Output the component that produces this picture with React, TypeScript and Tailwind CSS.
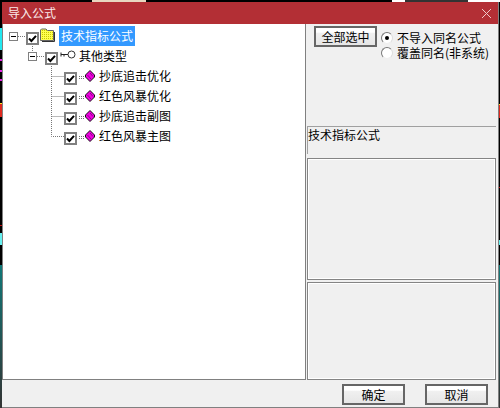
const cjk = "font-['Noto_Sans_CJK_SC','Noto_Sans_CJK_JP',sans-serif]";

const items = ["抄底追击优化", "红色风暴优化", "抄底追击副图", "红色风暴主图"];

const Check = () => (
  <div className="mt-[6px] flex h-[13px] w-[13px] shrink-0 items-center justify-center border-2 border-[#808080] bg-white">
    <svg width="9" height="9" viewBox="0 0 9 9">
      <path d="M1 4.5 L3.4 7 L8 1.8" fill="none" stroke="#000" strokeWidth="2" />
    </svg>
  </div>
);

const Expander = ({ x }: { x: number }) => (
  <>
    <rect x={x + 0.5} y="6.5" width="8" height="8" fill="#fff" stroke="#808080" />
    <path d={`M${x + 2} 10.5H${x + 7}`} stroke="#000" />
  </>
);

const Folder = () => (
  <svg width="15" height="14" viewBox="0 0 15 14" className="mt-[2px] ml-px mr-px shrink-0">
    <defs>
      <pattern id="hatch" width="2" height="2" patternUnits="userSpaceOnUse">
        <rect width="2" height="2" fill="#ffff50" />
        <rect width="1" height="1" fill="#c8c800" />
      </pattern>
    </defs>
    <path d="M0.5 12.5V2L1.5 1H6L7.5 2.5H13.5V12.5Z" fill="url(#hatch)" stroke="#666" />
    <path d="M14.5 4V13.5H2" fill="none" stroke="#333" />
  </svg>
);

const KeyIcon = () => (
  <svg width="16" height="12" viewBox="0 0 16 12" className="mt-[3px] ml-[2px] shrink-0">
    <circle cx="11.5" cy="5.5" r="3.5" fill="#fff" stroke="#333" />
    <path d="M1 5.5H8M1 3.5V7.5M4 5.5V7.5" fill="none" stroke="#222" />
  </svg>
);

const Gem = () => (
  <svg width="16" height="14" viewBox="0 0 16 14" className="mt-[4px] ml-[2px] shrink-0">
    <path d="M0 6.5H6M0 8.5H6" stroke="#707070" strokeDasharray="1 1" />
    <path d="M11 0.5L15.5 5V7L11 11.5L6.5 7V5Z" fill="#f000e0" stroke="#111" />
    <path d="M8.5 5L12 9M11 3L14 6.5" stroke="#900090" />
  </svg>
);

const Panel = ({ className }: { className: string }) => (
  <div className={`mr-[2px] border border-[#848484] bg-[#f0f0f0] shadow-[inset_0_0_0_1px_#fff] ${className}`} />
);

const DlgButton = ({ label, className }: { label: string; className: string }) => (
  <button
    className={`flex items-center justify-center border-2 border-[#666] bg-[linear-gradient(#fff_0,#fff_25%,#f0f0f0_30%,#e6e6e6_100%)] text-[12px] leading-none text-black ${className}`}
  >
    {label}
  </button>
);

const Radio = ({ checked, label }: { checked?: boolean; label: string }) => (
  <div className="flex h-[15px] items-center">
    <div className="flex h-[12px] w-[12px] shrink-0 items-center justify-center rounded-full border border-t-[#777] border-r-[#ddd] border-b-[#eee] border-l-[#777] bg-white">
      {checked && <div className="h-[4px] w-[4px] rounded-full bg-black" />}
    </div>
    <span className="ml-[4px] text-[12px] leading-[15px] whitespace-nowrap text-black">{label}</span>
  </div>
);

export default function App() {
  return (
    <div className={`flex h-[408px] w-[500px] flex-col overflow-hidden bg-black ${cjk}`}>
      {/* bits of the desktop behind the dialog */}
      <div className="flex h-[2px] shrink-0">
        <div className="w-[92px]" />
        <div className="w-[54px] bg-[#e8d8c0]" />
        <div className="w-[246px]" />
        <div className="w-[13px] bg-white" />
        <div className="w-[63px] bg-[#333]" />
        <div className="w-[32px] bg-white" />
      </div>
      <div className="flex min-h-0 flex-1">
        <div className="flex w-[2px] shrink-0 flex-col">
          <div className="h-[26px]" />
          <div className="h-[22px] bg-[#22e8f0]" />
          <div className="h-[9px]" />
          <div className="h-[2px] bg-[#e020e0]" />
          <div className="h-[9px]" />
          <div className="h-[2px] bg-[#e020e0]" />
          <div className="h-[7px]" />
          <div className="h-[2px] bg-[#e020e0]" />
          <div className="h-[22px]" />
          <div className="h-px bg-yellow-300" />
          <div className="h-[13px] bg-[#e02a20]" />
          <div className="h-[108px]" />
          <div className="h-px bg-[#c01010]" />
          <div className="h-[7px]" />
          <div className="h-[12px] bg-[#66f0f0]" />
          <div className="h-[20px]" />
          <div className="flex-1 bg-[linear-gradient(#107878,#333)]" />
        </div>
        <div className="flex w-[497px] shrink-0 flex-col border-r border-b border-[#808080] bg-[#f0f0f0]">
          <div className="flex h-[22px] shrink-0 items-center justify-between bg-[#b32f35] pr-[6px] pl-[6px]">
            <span className="text-[12px] leading-none text-[#fbeaea]">导入公式</span>
            <svg width="11" height="11" viewBox="0 0 11 11">
              <path d="M1 1L10 10M10 1L1 10" stroke="#f0c8c8" />
            </svg>
          </div>
          <div className="flex h-[356px] shrink-0">
            <div className="w-[304px] shrink-0 border-x border-b border-x-[#808080] border-b-[#808080] bg-white pt-[2px] text-[12px] text-black">
              <div className="flex h-5">
                <svg width="23" height="20" className="shrink-0">
                  <Expander x={6} />
                  <path d="M15 10.5H23" stroke="#777" strokeDasharray="1 1" />
                </svg>
                <Check />
                <Folder />
                <span className="ml-[3px] h-5 bg-[#3399ff] px-[2px] leading-5 text-white">技术指标公式</span>
              </div>
              <div className="flex h-5">
                <svg width="42" height="20" className="shrink-0">
                  <path d="M29.5 0V6" stroke="#777" strokeDasharray="1 1" />
                  <Expander x={25} />
                  <path d="M34 10.5H42" stroke="#777" strokeDasharray="1 1" />
                </svg>
                <Check />
                <KeyIcon />
                <span className="ml-[3px] leading-5">其他类型</span>
              </div>
              {items.map((name, i) => (
                <div key={name} className="flex h-5">
                  <svg width="61" height="20" className="shrink-0">
                    <path
                      d={i === items.length - 1 ? "M48.5 0V10.5H61" : "M48.5 0V20M48.5 10.5H61"}
                      fill="none"
                      stroke="#777"
                      strokeDasharray="1 1"
                    />
                  </svg>
                  <Check />
                  <Gem />
                  <span className="ml-[4px] leading-5">{name}</span>
                </div>
              ))}
            </div>
            <div className="flex min-w-0 flex-1 flex-col pl-[1px]">
              <div className="flex h-[102px] shrink-0 pt-[2px]">
                <DlgButton label="全部选中" className="ml-[7px] h-[21px] w-[63px]" />
                <div className="mt-[4px] ml-[4px] flex flex-col">
                  <Radio checked label="不导入同名公式" />
                  <Radio label="覆盖同名(非系统)" />
                </div>
              </div>
              <div className="mr-[2px] h-[28px] shrink-0 border-t border-l border-[#a0a0a0] text-[12px] leading-[16px] text-black">
                技术指标公式
              </div>
              <Panel className="mt-[4px] h-[122px] shrink-0" />
              <Panel className="mt-[2px] h-[98px] shrink-0" />
            </div>
          </div>
          <div className="flex flex-1 items-start justify-end pt-[4px] pr-[10px]">
            <DlgButton label="确定" className="h-[21px] w-[63px]" />
            <DlgButton label="取消" className="ml-[20px] h-[21px] w-[63px]" />
          </div>
        </div>
        <div className="flex w-px shrink-0 flex-col">
          <div className="h-[102px]" />
          <div className="h-px bg-yellow-300" />
          <div className="h-[13px] bg-[#e02a20]" />
          <div className="h-[69px]" />
          <div className="h-px bg-[#c01010]" />
          <div className="h-[52px]" />
          <div className="h-[5px] bg-[#66f0f0]" />
          <div className="h-[20px]" />
          <div className="flex-1 bg-[linear-gradient(#107878,#333)]" />
        </div>
      </div>
    </div>
  );
}
